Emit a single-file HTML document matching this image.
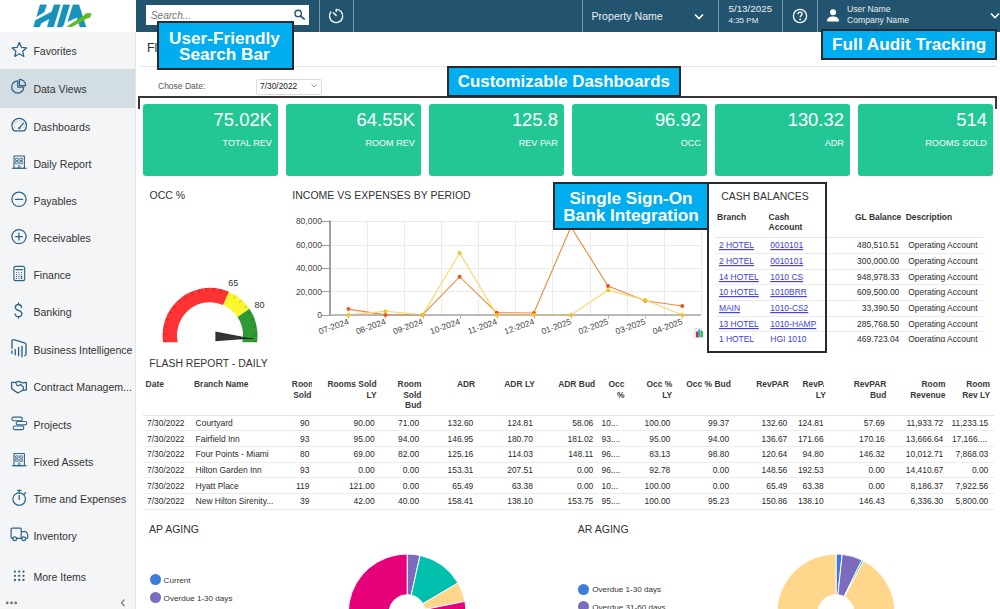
<!DOCTYPE html><html><head><meta charset="utf-8"><style>
html,body{margin:0;padding:0;}
body{width:1000px;height:609px;overflow:hidden;position:relative;background:#fff;font-family:"Liberation Sans",sans-serif;}
.t{position:absolute;white-space:nowrap;}
svg{position:absolute;overflow:visible;}
</style></head><body><div style="position:absolute;left:0px;top:0px;width:135px;height:32px;background:#fff;"></div><div style="position:absolute;left:0px;top:32px;width:135px;height:577px;background:#f4f5f7;"></div><div style="position:absolute;left:135px;top:32px;width:1px;height:577px;background:#e4e6e8;"></div><div style="position:absolute;left:0px;top:69px;width:135px;height:38.5px;background:#d3dde4;"></div><svg style="left:0;top:0" width="136" height="32" viewBox="0 0 136 32">
<g fill="#1793bb" stroke="#1793bb" stroke-width="0.3" stroke-linejoin="round">
<path d="M40.05 4.76 L46.7 4.76 L44.3 11.9 L36.6 16.7 Z"/>
<path d="M33.6 27.06 L39.6 27.06 L41.2 23.15 L49.5 18.8 L47.2 27.06 L53.6 27.06 L60.3 4.76 L54.1 4.76 L51.8 11.66 L35.2 20.4 Z"/>
<path d="M63.36 4.76 L69.8 4.76 L63.8 24.5 Q63 27.06 61.06 27.06 L56.9 27.06 Z"/>
<path d="M73.0 4.76 L79.0 4.76 L86.1 27.06 L79.9 27.06 L76.9 17.4 L67.7 21.8 Z"/>
</g>
<path d="M66.35 26.84 L84.06 15.34 L85.9 13.27 L91.8 13.27 L89.8 18.33 L88.43 17.87 L71.87 27.06 Z" fill="#5fbb24"/>
</svg><div class="t" style="top:46.05px;font-size:10.55px;line-height:11.79px;color:#333;left:33.40px;">Favorites</div><div class="t" style="top:84.05px;font-size:10.55px;line-height:11.79px;color:#333;left:33.40px;">Data Views</div><div class="t" style="top:121.55px;font-size:10.55px;line-height:11.79px;color:#333;left:33.40px;">Dashboards</div><div class="t" style="top:158.65px;font-size:10.55px;line-height:11.79px;color:#333;left:33.40px;">Daily Report</div><div class="t" style="top:195.75px;font-size:10.55px;line-height:11.79px;color:#333;left:33.40px;">Payables</div><div class="t" style="top:232.65px;font-size:10.55px;line-height:11.79px;color:#333;left:33.40px;">Receivables</div><div class="t" style="top:269.75px;font-size:10.55px;line-height:11.79px;color:#333;left:33.40px;">Finance</div><div class="t" style="top:306.75px;font-size:10.55px;line-height:11.79px;color:#333;left:33.40px;">Banking</div><div class="t" style="top:344.65px;font-size:10.55px;line-height:11.79px;color:#333;left:33.40px;">Business Intelligence</div><div class="t" style="top:382.35px;font-size:10.55px;line-height:11.79px;color:#333;left:33.40px;">Contract Managem...</div><div class="t" style="top:419.65px;font-size:10.55px;line-height:11.79px;color:#333;left:33.40px;">Projects</div><div class="t" style="top:456.75px;font-size:10.55px;line-height:11.79px;color:#333;left:33.40px;">Fixed Assets</div><div class="t" style="top:493.95px;font-size:10.55px;line-height:11.79px;color:#333;left:33.40px;">Time and Expenses</div><div class="t" style="top:531.05px;font-size:10.55px;line-height:11.79px;color:#333;left:33.40px;">Inventory</div><div class="t" style="top:571.65px;font-size:10.55px;line-height:11.79px;color:#333;left:33.40px;">More Items</div><svg style="left:0;top:0" width="136" height="609" fill="none" stroke="#2f6385" stroke-width="1.25" stroke-linejoin="round" stroke-linecap="round"><polygon points="19.30,42.50 21.42,47.29 26.62,47.82 22.72,51.31 23.83,56.43 19.30,53.80 14.77,56.43 15.88,51.31 11.98,47.82 17.18,47.29"/><path d="M17.75 80.9 A6.1 6.1 0 1 0 23.85 87 L17.75 87 Z"/><path d="M19.4 79.3 A6.2 6.2 0 0 1 25.6 85.5 L19.4 85.5 Z"/><path d="M13.95 130.77 A7.3 7.3 0 1 1 24.45 130.77 Z"/><circle cx="14.44" cy="127.25" r="0.45" fill="#2f6385" stroke="none"/><circle cx="14.26" cy="124.92" r="0.45" fill="#2f6385" stroke="none"/><circle cx="15.15" cy="122.76" r="0.45" fill="#2f6385" stroke="none"/><circle cx="16.93" cy="121.24" r="0.45" fill="#2f6385" stroke="none"/><circle cx="19.20" cy="120.70" r="0.45" fill="#2f6385" stroke="none"/><circle cx="21.47" cy="121.24" r="0.45" fill="#2f6385" stroke="none"/><circle cx="23.25" cy="122.76" r="0.45" fill="#2f6385" stroke="none"/><circle cx="24.14" cy="124.92" r="0.45" fill="#2f6385" stroke="none"/><circle cx="23.96" cy="127.25" r="0.45" fill="#2f6385" stroke="none"/><path d="M19.3 128.1 L23.2 123.4" stroke-width="1.3"/><circle cx="19.3" cy="128.1" r="1.2" fill="#2f6385" stroke="none"/><rect x="14" y="156" width="10.4" height="12.3" stroke-width="1.1"/><path d="M12.2 168.3 L26.4 168.3" stroke-width="1.1"/><rect x="16.0" y="158.3" width="2.2" height="2.2" stroke-width="0.8"/><rect x="20.2" y="158.3" width="2.2" height="2.2" stroke-width="0.8"/><rect x="16.0" y="161.6" width="2.2" height="2.2" stroke-width="0.8"/><rect x="20.2" y="161.6" width="2.2" height="2.2" stroke-width="0.8"/><path d="M18.4 168.3 L18.4 165.8 Q19.2 164.9 20.0 165.8 L20.0 168.3" stroke-width="0.8"/><rect x="14" y="453.5" width="10.4" height="12.3" stroke-width="1.1"/><path d="M12.2 465.8 L26.4 465.8" stroke-width="1.1"/><rect x="16.0" y="455.8" width="2.2" height="2.2" stroke-width="0.8"/><rect x="20.2" y="455.8" width="2.2" height="2.2" stroke-width="0.8"/><rect x="16.0" y="459.1" width="2.2" height="2.2" stroke-width="0.8"/><rect x="20.2" y="459.1" width="2.2" height="2.2" stroke-width="0.8"/><path d="M18.4 465.8 L18.4 463.3 Q19.2 462.4 20.0 463.3 L20.0 465.8" stroke-width="0.8"/><circle cx="19" cy="199.3" r="7.1"/><path d="M15.3 199.3 L22.7 199.3"/><circle cx="19" cy="236.6" r="7.1"/><path d="M15.6 236.6 L22.4 236.6 M19 233.2 L19 240"/><rect x="13.9" y="266.3" width="10.8" height="14.4" rx="2" stroke-width="1.15"/><path d="M15.9 269.6 L22.7 269.6" stroke-width="1.3"/><circle cx="16.5" cy="272.5" r="0.6" fill="#2f6385" stroke="none"/><circle cx="16.5" cy="274.5" r="0.6" fill="#2f6385" stroke="none"/><circle cx="16.5" cy="276.4" r="0.6" fill="#2f6385" stroke="none"/><circle cx="16.5" cy="278.4" r="0.6" fill="#2f6385" stroke="none"/><circle cx="19.0" cy="272.5" r="0.6" fill="#2f6385" stroke="none"/><circle cx="19.0" cy="274.5" r="0.6" fill="#2f6385" stroke="none"/><circle cx="19.0" cy="276.4" r="0.6" fill="#2f6385" stroke="none"/><circle cx="19.0" cy="278.4" r="0.6" fill="#2f6385" stroke="none"/><circle cx="21.5" cy="272.5" r="0.6" fill="#2f6385" stroke="none"/><circle cx="21.5" cy="274.5" r="0.6" fill="#2f6385" stroke="none"/><path d="M21.5 276.2 L21.5 278.6" stroke-width="1.2"/><path d="M21.6 307.3 C21.2 305.4 20.1 304.5 18.5 304.5 C16.6 304.5 15.3 305.7 15.3 307.4 C15.3 311.2 21.9 309.6 21.9 313.8 C21.9 315.6 20.5 316.7 18.5 316.7 C16.6 316.7 15.4 315.6 15.1 314 M18.5 302.9 L18.5 304.5 M18.5 316.7 L18.5 318.2" stroke-width="1.3"/><path d="M12 348.2 L12 341.2 Q12 339.4 13.6 339.7 L24.6 342.9 Q26 343.4 26 344.8 L26 354.3 Q26 355.4 24.8 355.6" stroke-width="1.35"/><path d="M12 350.8 L12 353.4" stroke-width="1.35"/><path d="M15.3 349.6 L15.3 354.8" stroke-width="1.35"/><path d="M18.6 347.4 L18.6 355.7" stroke-width="1.35"/><path d="M22.0 346.3 L22.0 356.5" stroke-width="1.35"/><path d="M11.6 382.3 L16.2 382.3 M19.2 381.6 L22.8 382.9 L26.4 382.3 L26.4 390.2 L22.9 390.2 L17.8 393 L11.6 388.6 L11.6 382.3" stroke-width="1.3"/><path d="M15.7 382.5 L16.9 385.2 Q19.2 386.5 20.6 384.4 L23.6 387.3 L22.9 390.2 M16.2 382.3 Q18.3 380.8 19.4 381.6" stroke-width="1.2"/><rect x="11.9" y="417.1" width="10.4" height="3.6" rx="1.6" stroke-width="1.1"/><rect x="16.2" y="421.5" width="10.6" height="3.4" rx="1.6" stroke-width="1.1"/><rect x="13.1" y="426" width="10.6" height="3.6" rx="1.6" stroke-width="1.1"/><circle cx="19.2" cy="499.1" r="6.3"/><path d="M17.6 490.4 L20.8 490.4 M19.2 490.4 L19.2 492.8 M23.9 494.3 L25.7 492.7 M19.2 495.5 L19.2 499.4" stroke-width="1.3"/><path d="M12.8 538.4 L11.9 538.4 Q11.1 538.4 11.1 537.6 L11.1 529.3 Q11.1 528.2 12.2 528.2 L20.2 528.2 Q21.2 528.2 21.2 529.3 L21.2 538.4 L21.7 538.4 M21.2 531.7 L25.3 531.7 Q26.2 531.7 26.7 532.5 L27.7 534.6 L27.7 537.6 Q27.7 538.4 26.9 538.4 L25.7 538.4 M16.7 538.4 L21.7 538.4" stroke-width="1.2"/><circle cx="14.7" cy="538.8" r="1.9" stroke-width="1.2"/><circle cx="23.7" cy="538.8" r="1.9" stroke-width="1.2"/><circle cx="14.9" cy="571.6" r="1.15" fill="#2f6385" stroke="none"/><circle cx="14.9" cy="575.8" r="1.15" fill="#2f6385" stroke="none"/><circle cx="14.9" cy="580.0" r="1.15" fill="#2f6385" stroke="none"/><circle cx="19.2" cy="571.6" r="1.15" fill="#2f6385" stroke="none"/><circle cx="19.2" cy="575.8" r="1.15" fill="#2f6385" stroke="none"/><circle cx="19.2" cy="580.0" r="1.15" fill="#2f6385" stroke="none"/><circle cx="23.5" cy="571.6" r="1.15" fill="#2f6385" stroke="none"/><circle cx="23.5" cy="575.8" r="1.15" fill="#2f6385" stroke="none"/><circle cx="23.5" cy="580.0" r="1.15" fill="#2f6385" stroke="none"/></svg><svg style="left:0;top:595px" width="136" height="14"><g fill="#6e6e6e"><circle cx="7.3" cy="7.9" r="1.3"/><circle cx="11.5" cy="7.9" r="1.3"/><circle cx="15.7" cy="7.9" r="1.3"/></g><path d="M124.5 4.5 L121.5 7.8 L124.5 11" stroke="#666" stroke-width="1.1" fill="none"/></svg><div style="position:absolute;left:136px;top:0px;width:864px;height:32px;background:#23546f;"></div><div style="position:absolute;left:318.5px;top:0px;width:1px;height:32px;background:#7b98a9;"></div><div style="position:absolute;left:353px;top:0px;width:1px;height:32px;background:#7b98a9;"></div><div style="position:absolute;left:582px;top:0px;width:1px;height:32px;background:#7b98a9;"></div><div style="position:absolute;left:718px;top:0px;width:1px;height:32px;background:#7b98a9;"></div><div style="position:absolute;left:782px;top:0px;width:1px;height:32px;background:#7b98a9;"></div><div style="position:absolute;left:817px;top:0px;width:1px;height:32px;background:#7b98a9;"></div><div style="position:absolute;left:146px;top:5px;width:163px;height:19.5px;background:#fff;"></div><div class="t" style="top:9.56px;font-size:10.1px;line-height:11.28px;color:#727272;left:150.80px;font-style:italic;">Search...</div><svg style="left:290px;top:8px" width="18" height="15"><circle cx="8.2" cy="5.4" r="3.2" fill="none" stroke="#23546f" stroke-width="1.4"/><path d="M10.6 7.8 L14.2 11.2" stroke="#23546f" stroke-width="1.6" stroke-linecap="round"/></svg><svg style="left:0;top:0" width="1000" height="32"><path d="M336.2 11.4 L336.2 9.4 A6.6 6.6 0 1 1 330.83 12.03" fill="none" stroke="#fff" stroke-width="1.4" stroke-linecap="round" stroke-linejoin="round"/><path d="M333.4 12.7 L336.2 15.5" stroke="#fff" stroke-width="1.4" stroke-linecap="round"/></svg><div class="t" style="top:10.60px;font-size:10.6px;line-height:11.84px;color:#e9eef1;left:591.50px;">Property Name</div><svg style="left:692px;top:10px" width="14" height="12"><path d="M3 4.5 L7 8.5 L11 4.5" fill="none" stroke="#fff" stroke-width="1.6"/></svg><div class="t" style="top:3.83px;font-size:9.8px;line-height:10.95px;color:#e9eef1;left:728.50px;">5/13/2025</div><div class="t" style="top:16.76px;font-size:8px;line-height:8.94px;color:#e9eef1;left:728.50px;">4:35 PM</div><svg style="left:791px;top:7px" width="18" height="18"><circle cx="9" cy="9" r="6.6" fill="none" stroke="#fff" stroke-width="1.3"/><path d="M7 7.3 C7 5.9 8 5.2 9.1 5.2 C10.3 5.2 11.1 6 11.1 7.1 C11.1 8.4 9.2 8.7 9.2 10.2" fill="none" stroke="#fff" stroke-width="1.3"/><circle cx="9.2" cy="12.4" r="0.9" fill="#fff"/></svg><svg style="left:824px;top:7px" width="18" height="18"><circle cx="9" cy="5.3" r="3" fill="#fff"/><path d="M3 14.5 C3 10.8 6 9.6 9 9.6 C12 9.6 15 10.8 15 14.5 Z" fill="#fff"/></svg><div class="t" style="top:5.01px;font-size:8.6px;line-height:9.61px;color:#e9eef1;left:847.00px;">User Name</div><div class="t" style="top:15.61px;font-size:8.6px;line-height:9.61px;color:#e9eef1;left:847.00px;">Company Name</div><svg style="left:988px;top:10px" width="12" height="12"><path d="M3 3.5 L7 7.5 L11 3.5" fill="none" stroke="#fff" stroke-width="1.6"/></svg><div class="t" style="top:42.27px;font-size:12.4px;line-height:13.85px;color:#2a2a2a;left:147.00px;">Flash Dashboard</div><div style="position:absolute;left:140px;top:66px;width:857px;height:1px;background:#e6e6e6;"></div><div class="t" style="top:81.70px;font-size:8.5px;line-height:9.50px;color:#555;left:158.00px;">Chose Date:</div><div style="position:absolute;left:255.5px;top:78.5px;width:64px;height:14.5px;border:1px solid #dcdcdc;border-radius:2px;background:#fff;"></div><div class="t" style="top:81.80px;font-size:8.4px;line-height:9.38px;color:#222;left:260.00px;">7/30/2022</div><svg style="left:310px;top:82px" width="8" height="8"><path d="M1.5 2.5 L4 5 L6.5 2.5" fill="none" stroke="#888" stroke-width="0.9"/></svg><div style="position:absolute;left:143.2px;top:103.5px;width:134.7px;height:72.5px;background:#22c795;border-radius:3px;"></div><div class="t" style="top:109.64px;font-size:18.4px;line-height:20.56px;color:#fff;right:728.10px;text-align:right;">75.02K</div><div class="t" style="top:138.16px;font-size:9.1px;line-height:10.17px;color:#fff;transform:scaleY(1.04);transform-origin:0 8.24px;right:728.10px;text-align:right;">TOTAL REV</div><div style="position:absolute;left:286.2px;top:103.5px;width:134.7px;height:72.5px;background:#22c795;border-radius:3px;"></div><div class="t" style="top:109.64px;font-size:18.4px;line-height:20.56px;color:#fff;right:585.10px;text-align:right;">64.55K</div><div class="t" style="top:138.16px;font-size:9.1px;line-height:10.17px;color:#fff;transform:scaleY(1.04);transform-origin:0 8.24px;right:585.10px;text-align:right;">ROOM REV</div><div style="position:absolute;left:429.2px;top:103.5px;width:134.7px;height:72.5px;background:#22c795;border-radius:3px;"></div><div class="t" style="top:109.64px;font-size:18.4px;line-height:20.56px;color:#fff;right:442.10px;text-align:right;">125.8</div><div class="t" style="top:138.16px;font-size:9.1px;line-height:10.17px;color:#fff;transform:scaleY(1.04);transform-origin:0 8.24px;right:442.10px;text-align:right;">REV PAR</div><div style="position:absolute;left:572.2px;top:103.5px;width:134.7px;height:72.5px;background:#22c795;border-radius:3px;"></div><div class="t" style="top:109.64px;font-size:18.4px;line-height:20.56px;color:#fff;right:299.10px;text-align:right;">96.92</div><div class="t" style="top:138.16px;font-size:9.1px;line-height:10.17px;color:#fff;transform:scaleY(1.04);transform-origin:0 8.24px;right:299.10px;text-align:right;">OCC</div><div style="position:absolute;left:715.2px;top:103.5px;width:134.7px;height:72.5px;background:#22c795;border-radius:3px;"></div><div class="t" style="top:109.64px;font-size:18.4px;line-height:20.56px;color:#fff;right:156.10px;text-align:right;">130.32</div><div class="t" style="top:138.16px;font-size:9.1px;line-height:10.17px;color:#fff;transform:scaleY(1.04);transform-origin:0 8.24px;right:156.10px;text-align:right;">ADR</div><div style="position:absolute;left:858.2px;top:103.5px;width:134.7px;height:72.5px;background:#22c795;border-radius:3px;"></div><div class="t" style="top:109.64px;font-size:18.4px;line-height:20.56px;color:#fff;right:13.10px;text-align:right;">514</div><div class="t" style="top:138.16px;font-size:9.1px;line-height:10.17px;color:#fff;transform:scaleY(1.04);transform-origin:0 8.24px;right:13.10px;text-align:right;">ROOMS SOLD</div><div style="position:absolute;left:138px;top:96px;width:859px;height:2px;background:#38363c;"></div><div style="position:absolute;left:138px;top:96px;width:2px;height:12.5px;background:#38363c;"></div><div style="position:absolute;left:995px;top:96px;width:2px;height:12.5px;background:#38363c;"></div><div class="t" style="top:190.49px;font-size:10.5px;line-height:11.73px;color:#333;left:149.50px;">OCC %</div><div class="t" style="top:190.49px;font-size:10.5px;line-height:11.73px;color:#333;left:292.30px;">INCOME VS EXPENSES BY PERIOD</div><div class="t" style="top:190.54px;font-size:10.45px;line-height:11.67px;color:#333;left:721.20px;">CASH BALANCES</div><svg style="left:0;top:0" width="1000" height="609"><defs><clipPath id="gc"><rect x="150" y="270" width="120" height="72.3"/></clipPath></defs><g clip-path="url(#gc)"><path d="M167.05 355.30 A47.45 47.45 0 0 1 228.89 291.70 L223.16 304.96 A33.0 33.0 0 0 0 180.14 349.20 Z" fill="#fe3333"/><path d="M228.89 291.70 A47.45 47.45 0 0 1 249.48 308.85 L237.47 316.89 A33.0 33.0 0 0 0 223.16 304.96 Z" fill="#fbf72f"/><path d="M249.48 308.85 A47.45 47.45 0 0 1 253.05 355.30 L239.96 349.20 A33.0 33.0 0 0 0 237.47 316.89 Z" fill="#2f9a33"/><line x1="163.32" y1="341.53" x2="166.99" y2="341.03" stroke="rgba(0,0,0,0.28)" stroke-width="0.8"/><line x1="162.92" y1="333.89" x2="166.62" y2="334.00" stroke="rgba(0,0,0,0.28)" stroke-width="0.8"/><line x1="163.76" y1="326.29" x2="167.39" y2="327.00" stroke="rgba(0,0,0,0.28)" stroke-width="0.8"/><line x1="165.81" y1="318.93" x2="169.29" y2="320.21" stroke="rgba(0,0,0,0.28)" stroke-width="0.8"/><line x1="169.03" y1="312.00" x2="172.25" y2="313.82" stroke="rgba(0,0,0,0.28)" stroke-width="0.8"/><line x1="173.33" y1="305.67" x2="176.21" y2="307.99" stroke="rgba(0,0,0,0.28)" stroke-width="0.8"/><line x1="178.59" y1="300.13" x2="181.06" y2="302.88" stroke="rgba(0,0,0,0.28)" stroke-width="0.8"/><line x1="184.68" y1="295.51" x2="186.67" y2="298.63" stroke="rgba(0,0,0,0.28)" stroke-width="0.8"/><line x1="191.44" y1="291.93" x2="192.90" y2="295.33" stroke="rgba(0,0,0,0.28)" stroke-width="0.8"/><line x1="198.68" y1="289.49" x2="199.58" y2="293.08" stroke="rgba(0,0,0,0.28)" stroke-width="0.8"/><line x1="206.23" y1="288.26" x2="206.53" y2="291.94" stroke="rgba(0,0,0,0.28)" stroke-width="0.8"/><line x1="213.87" y1="288.26" x2="213.57" y2="291.94" stroke="rgba(0,0,0,0.28)" stroke-width="0.8"/><line x1="221.42" y1="289.49" x2="220.52" y2="293.08" stroke="rgba(0,0,0,0.28)" stroke-width="0.8"/><line x1="228.66" y1="291.93" x2="227.20" y2="295.33" stroke="rgba(0,0,0,0.28)" stroke-width="0.8"/><line x1="235.42" y1="295.51" x2="233.43" y2="298.63" stroke="rgba(0,0,0,0.28)" stroke-width="0.8"/><line x1="241.51" y1="300.13" x2="239.04" y2="302.88" stroke="rgba(0,0,0,0.28)" stroke-width="0.8"/><line x1="246.77" y1="305.67" x2="243.89" y2="307.99" stroke="rgba(0,0,0,0.28)" stroke-width="0.8"/><line x1="251.07" y1="312.00" x2="247.85" y2="313.82" stroke="rgba(0,0,0,0.28)" stroke-width="0.8"/><line x1="254.29" y1="318.93" x2="250.81" y2="320.21" stroke="rgba(0,0,0,0.28)" stroke-width="0.8"/><line x1="256.34" y1="326.29" x2="252.71" y2="327.00" stroke="rgba(0,0,0,0.28)" stroke-width="0.8"/><line x1="257.18" y1="333.89" x2="253.48" y2="334.00" stroke="rgba(0,0,0,0.28)" stroke-width="0.8"/><line x1="256.78" y1="341.53" x2="253.11" y2="341.03" stroke="rgba(0,0,0,0.28)" stroke-width="0.8"/></g><polygon points="215.4,331.4 215.4,341.3 251.8,338.4" fill="#333"/><line x1="240" y1="338.6" x2="253.5" y2="338.5" stroke="#222" stroke-width="1"/><text x="233.3" y="286.3" font-size="9" fill="#333" text-anchor="middle">65</text><text x="254.4" y="308.2" font-size="9" fill="#333">80</text><line x1="329.8" y1="221.5" x2="700.8" y2="221.5" stroke="#ebebeb" stroke-width="1"/><line x1="321.3" y1="221.5" x2="329.8" y2="221.5" stroke="#999" stroke-width="1"/><text x="321.90000000000003" y="224.30" font-size="8.5" fill="#444" text-anchor="end">80,000</text><line x1="329.8" y1="245.5" x2="700.8" y2="245.5" stroke="#ebebeb" stroke-width="1"/><line x1="321.3" y1="245.5" x2="329.8" y2="245.5" stroke="#999" stroke-width="1"/><text x="321.90000000000003" y="247.75" font-size="8.5" fill="#444" text-anchor="end">60,000</text><line x1="329.8" y1="268.5" x2="700.8" y2="268.5" stroke="#ebebeb" stroke-width="1"/><line x1="321.3" y1="268.5" x2="329.8" y2="268.5" stroke="#999" stroke-width="1"/><text x="321.90000000000003" y="271.20" font-size="8.5" fill="#444" text-anchor="end">40,000</text><line x1="329.8" y1="291.5" x2="700.8" y2="291.5" stroke="#ebebeb" stroke-width="1"/><line x1="321.3" y1="291.5" x2="329.8" y2="291.5" stroke="#999" stroke-width="1"/><text x="321.90000000000003" y="294.65" font-size="8.5" fill="#444" text-anchor="end">20,000</text><line x1="329.8" y1="315.5" x2="700.8" y2="315.5" stroke="#ebebeb" stroke-width="1"/><line x1="321.3" y1="315.5" x2="329.8" y2="315.5" stroke="#999" stroke-width="1"/><text x="321.90000000000003" y="318.10" font-size="8.5" fill="#444" text-anchor="end">0</text><line x1="367.5" y1="221.1" x2="367.5" y2="314.9" stroke="#ebebeb" stroke-width="1"/><line x1="404.5" y1="221.1" x2="404.5" y2="314.9" stroke="#ebebeb" stroke-width="1"/><line x1="441.5" y1="221.1" x2="441.5" y2="314.9" stroke="#ebebeb" stroke-width="1"/><line x1="478.5" y1="221.1" x2="478.5" y2="314.9" stroke="#ebebeb" stroke-width="1"/><line x1="515.5" y1="221.1" x2="515.5" y2="314.9" stroke="#ebebeb" stroke-width="1"/><line x1="552.5" y1="221.1" x2="552.5" y2="314.9" stroke="#ebebeb" stroke-width="1"/><line x1="590.5" y1="221.1" x2="590.5" y2="314.9" stroke="#ebebeb" stroke-width="1"/><line x1="627.5" y1="221.1" x2="627.5" y2="314.9" stroke="#ebebeb" stroke-width="1"/><line x1="664.5" y1="221.1" x2="664.5" y2="314.9" stroke="#ebebeb" stroke-width="1"/><line x1="701.5" y1="221.1" x2="701.5" y2="314.9" stroke="#ebebeb" stroke-width="1"/><line x1="330" y1="220.6" x2="330" y2="315.4" stroke="#8a8a8a" stroke-width="1.6"/><line x1="329.8" y1="315" x2="700.8" y2="315" stroke="#a8a8a8" stroke-width="1.1"/><line x1="348.5" y1="314.9" x2="348.5" y2="318.9" stroke="#aaa" stroke-width="0.8"/><line x1="385.5" y1="314.9" x2="385.5" y2="318.9" stroke="#aaa" stroke-width="0.8"/><line x1="423.5" y1="314.9" x2="423.5" y2="318.9" stroke="#aaa" stroke-width="0.8"/><line x1="460.5" y1="314.9" x2="460.5" y2="318.9" stroke="#aaa" stroke-width="0.8"/><line x1="497.5" y1="314.9" x2="497.5" y2="318.9" stroke="#aaa" stroke-width="0.8"/><line x1="534.5" y1="314.9" x2="534.5" y2="318.9" stroke="#aaa" stroke-width="0.8"/><line x1="571.5" y1="314.9" x2="571.5" y2="318.9" stroke="#aaa" stroke-width="0.8"/><line x1="608.5" y1="314.9" x2="608.5" y2="318.9" stroke="#aaa" stroke-width="0.8"/><line x1="645.5" y1="314.9" x2="645.5" y2="318.9" stroke="#aaa" stroke-width="0.8"/><line x1="682.5" y1="314.9" x2="682.5" y2="318.9" stroke="#aaa" stroke-width="0.8"/><text transform="translate(349.35,323.9) rotate(-20)" font-size="8.5" fill="#444" text-anchor="end">07-2024</text><text transform="translate(386.45,323.9) rotate(-20)" font-size="8.5" fill="#444" text-anchor="end">08-2024</text><text transform="translate(423.55,323.9) rotate(-20)" font-size="8.5" fill="#444" text-anchor="end">09-2024</text><text transform="translate(460.65,323.9) rotate(-20)" font-size="8.5" fill="#444" text-anchor="end">10-2024</text><text transform="translate(497.75,323.9) rotate(-20)" font-size="8.5" fill="#444" text-anchor="end">11-2024</text><text transform="translate(534.85,323.9) rotate(-20)" font-size="8.5" fill="#444" text-anchor="end">12-2024</text><text transform="translate(571.95,323.9) rotate(-20)" font-size="8.5" fill="#444" text-anchor="end">01-2025</text><text transform="translate(609.05,323.9) rotate(-20)" font-size="8.5" fill="#444" text-anchor="end">02-2025</text><text transform="translate(646.15,323.9) rotate(-20)" font-size="8.5" fill="#444" text-anchor="end">03-2025</text><text transform="translate(683.25,323.9) rotate(-20)" font-size="8.5" fill="#444" text-anchor="end">04-2025</text><polyline points="348.35,309.10 385.45,314.90 422.55,314.90 459.65,276.70 496.75,312.70 533.85,313.00 570.95,226.96 608.05,286.00 645.15,300.70 682.25,306.00" fill="none" stroke="#f0883a" stroke-width="1.1"/><polyline points="348.35,314.90 385.45,311.20 422.55,314.90 459.65,252.99 496.75,314.90 533.85,314.90 570.95,314.90 608.05,290.20 645.15,300.01 682.25,314.90" fill="none" stroke="#fdd668" stroke-width="1.1"/><line x1="329.8" y1="315" x2="700.8" y2="315" stroke="#a8a8a8" stroke-width="1.1"/><circle cx="348.35" cy="309.10" r="2" fill="#e8561b"/><circle cx="385.45" cy="314.90" r="2" fill="#e8561b"/><circle cx="422.55" cy="314.90" r="2" fill="#e8561b"/><circle cx="459.65" cy="276.70" r="2" fill="#e8561b"/><circle cx="496.75" cy="312.70" r="2" fill="#e8561b"/><circle cx="533.85" cy="313.00" r="2" fill="#e8561b"/><circle cx="570.95" cy="226.96" r="2" fill="#e8561b"/><circle cx="608.05" cy="286.00" r="2" fill="#e8561b"/><circle cx="645.15" cy="300.70" r="2" fill="#e8561b"/><circle cx="682.25" cy="306.00" r="2" fill="#e8561b"/><circle cx="348.35" cy="314.90" r="2" fill="#f9c31f"/><circle cx="385.45" cy="311.20" r="2" fill="#f9c31f"/><circle cx="422.55" cy="314.90" r="2" fill="#f9c31f"/><circle cx="459.65" cy="252.99" r="2" fill="#f9c31f"/><circle cx="496.75" cy="314.90" r="2" fill="#f9c31f"/><circle cx="533.85" cy="314.90" r="2" fill="#f9c31f"/><circle cx="570.95" cy="314.90" r="2" fill="#f9c31f"/><circle cx="608.05" cy="290.20" r="2" fill="#f9c31f"/><circle cx="645.15" cy="300.01" r="2" fill="#f9c31f"/><circle cx="682.25" cy="314.90" r="2" fill="#f9c31f"/><rect x="694.2" y="328.4" width="7.4" height="9" fill="#f4f8fb" stroke="#c9d6e0" stroke-width="0.6"/><rect x="695.9" y="331.6" width="2.4" height="5.8" rx="0.8" fill="#e8262a"/><rect x="698.1" y="329.5" width="2.4" height="7.9" rx="0.8" fill="#2ba4e6"/><rect x="700.7" y="330.8" width="2.3" height="6.6" rx="0.8" fill="#4cb830"/></svg><div class="t" style="top:212.85px;font-size:8.45px;line-height:9.44px;color:#333;font-weight:bold;left:717.10px;">Branch</div><div class="t" style="top:212.85px;font-size:8.45px;line-height:9.44px;color:#333;font-weight:bold;left:768.60px;">Cash</div><div class="t" style="top:223.45px;font-size:8.45px;line-height:9.44px;color:#333;font-weight:bold;left:768.60px;">Account</div><div class="t" style="top:212.85px;font-size:8.45px;line-height:9.44px;color:#333;font-weight:bold;right:98.70px;text-align:right;">GL Balance</div><div class="t" style="top:212.85px;font-size:8.45px;line-height:9.44px;color:#333;font-weight:bold;left:905.70px;">Description</div><div style="position:absolute;left:714.7px;top:237px;width:268px;height:1px;background:#e4e4e4;"></div><div style="position:absolute;left:700px;top:238px;width:300px;height:104.3px;overflow:hidden;"><div class="t" style="top:3.35px;font-size:8.45px;line-height:9.44px;color:#3c3cd8;transform:scaleY(1.13);transform-origin:0 7.65px;left:18.90px;text-decoration:underline;">2 HOTEL</div><div class="t" style="top:3.35px;font-size:8.45px;line-height:9.44px;color:#3c3cd8;transform:scaleY(1.13);transform-origin:0 7.65px;left:70.30px;text-decoration:underline;">0010101</div><div class="t" style="top:3.35px;font-size:8.45px;line-height:9.44px;color:#2a2a2a;transform:scaleY(1.13);transform-origin:0 7.65px;right:100.70px;text-align:right;">480,510.51</div><div class="t" style="top:3.35px;font-size:8.45px;line-height:9.44px;color:#2a2a2a;transform:scaleY(1.13);transform-origin:0 7.65px;left:208.20px;">Operating Account</div><div style="position:absolute;left:14.7px;top:15.00px;width:268px;height:0;border-top:1px solid #ececec;"></div><div class="t" style="top:19.01px;font-size:8.45px;line-height:9.44px;color:#3c3cd8;transform:scaleY(1.13);transform-origin:0 7.65px;left:18.90px;text-decoration:underline;">2 HOTEL</div><div class="t" style="top:19.01px;font-size:8.45px;line-height:9.44px;color:#3c3cd8;transform:scaleY(1.13);transform-origin:0 7.65px;left:70.30px;text-decoration:underline;">0010101</div><div class="t" style="top:19.01px;font-size:8.45px;line-height:9.44px;color:#2a2a2a;transform:scaleY(1.13);transform-origin:0 7.65px;right:100.70px;text-align:right;">300,000.00</div><div class="t" style="top:19.01px;font-size:8.45px;line-height:9.44px;color:#2a2a2a;transform:scaleY(1.13);transform-origin:0 7.65px;left:208.20px;">Operating Account</div><div style="position:absolute;left:14.7px;top:30.66px;width:268px;height:0;border-top:1px solid #ececec;"></div><div class="t" style="top:34.67px;font-size:8.45px;line-height:9.44px;color:#3c3cd8;transform:scaleY(1.13);transform-origin:0 7.65px;left:18.90px;text-decoration:underline;">14 HOTEL</div><div class="t" style="top:34.67px;font-size:8.45px;line-height:9.44px;color:#3c3cd8;transform:scaleY(1.13);transform-origin:0 7.65px;left:70.30px;text-decoration:underline;">1010 CS</div><div class="t" style="top:34.67px;font-size:8.45px;line-height:9.44px;color:#2a2a2a;transform:scaleY(1.13);transform-origin:0 7.65px;right:100.70px;text-align:right;">948,978.33</div><div class="t" style="top:34.67px;font-size:8.45px;line-height:9.44px;color:#2a2a2a;transform:scaleY(1.13);transform-origin:0 7.65px;left:208.20px;">Operating Account</div><div style="position:absolute;left:14.7px;top:46.32px;width:268px;height:0;border-top:1px solid #ececec;"></div><div class="t" style="top:50.33px;font-size:8.45px;line-height:9.44px;color:#3c3cd8;transform:scaleY(1.13);transform-origin:0 7.65px;left:18.90px;text-decoration:underline;">10 HOTEL</div><div class="t" style="top:50.33px;font-size:8.45px;line-height:9.44px;color:#3c3cd8;transform:scaleY(1.13);transform-origin:0 7.65px;left:70.30px;text-decoration:underline;">1010BRR</div><div class="t" style="top:50.33px;font-size:8.45px;line-height:9.44px;color:#2a2a2a;transform:scaleY(1.13);transform-origin:0 7.65px;right:100.70px;text-align:right;">609,500.00</div><div class="t" style="top:50.33px;font-size:8.45px;line-height:9.44px;color:#2a2a2a;transform:scaleY(1.13);transform-origin:0 7.65px;left:208.20px;">Operating Account</div><div style="position:absolute;left:14.7px;top:61.98px;width:268px;height:0;border-top:1px solid #ececec;"></div><div class="t" style="top:65.99px;font-size:8.45px;line-height:9.44px;color:#3c3cd8;transform:scaleY(1.13);transform-origin:0 7.65px;left:18.90px;text-decoration:underline;">MAIN</div><div class="t" style="top:65.99px;font-size:8.45px;line-height:9.44px;color:#3c3cd8;transform:scaleY(1.13);transform-origin:0 7.65px;left:70.30px;text-decoration:underline;">1010-CS2</div><div class="t" style="top:65.99px;font-size:8.45px;line-height:9.44px;color:#2a2a2a;transform:scaleY(1.13);transform-origin:0 7.65px;right:100.70px;text-align:right;">33,390.50</div><div class="t" style="top:65.99px;font-size:8.45px;line-height:9.44px;color:#2a2a2a;transform:scaleY(1.13);transform-origin:0 7.65px;left:208.20px;">Operating Account</div><div style="position:absolute;left:14.7px;top:77.64px;width:268px;height:0;border-top:1px solid #ececec;"></div><div class="t" style="top:81.65px;font-size:8.45px;line-height:9.44px;color:#3c3cd8;transform:scaleY(1.13);transform-origin:0 7.65px;left:18.90px;text-decoration:underline;">13 HOTEL</div><div class="t" style="top:81.65px;font-size:8.45px;line-height:9.44px;color:#3c3cd8;transform:scaleY(1.13);transform-origin:0 7.65px;left:70.30px;text-decoration:underline;">1010-HAMP</div><div class="t" style="top:81.65px;font-size:8.45px;line-height:9.44px;color:#2a2a2a;transform:scaleY(1.13);transform-origin:0 7.65px;right:100.70px;text-align:right;">285,768.50</div><div class="t" style="top:81.65px;font-size:8.45px;line-height:9.44px;color:#2a2a2a;transform:scaleY(1.13);transform-origin:0 7.65px;left:208.20px;">Operating Account</div><div style="position:absolute;left:14.7px;top:93.30px;width:268px;height:0;border-top:1px solid #ececec;"></div><div class="t" style="top:97.31px;font-size:8.45px;line-height:9.44px;color:#3c3cd8;transform:scaleY(1.13);transform-origin:0 7.65px;left:18.90px;">1 HOTEL</div><div class="t" style="top:97.31px;font-size:8.45px;line-height:9.44px;color:#3c3cd8;transform:scaleY(1.13);transform-origin:0 7.65px;left:70.30px;">HGI 1010</div><div class="t" style="top:97.31px;font-size:8.45px;line-height:9.44px;color:#2a2a2a;transform:scaleY(1.13);transform-origin:0 7.65px;right:100.70px;text-align:right;">469,723.04</div><div class="t" style="top:97.31px;font-size:8.45px;line-height:9.44px;color:#2a2a2a;transform:scaleY(1.13);transform-origin:0 7.65px;left:208.20px;">Operating Account</div></div><div class="t" style="top:358.34px;font-size:10.45px;line-height:11.67px;color:#333;left:149.30px;">FLASH REPORT - DAILY</div><div class="t" style="top:380.05px;font-size:8.45px;line-height:9.44px;color:#3a3a3a;font-weight:bold;left:145.60px;">Date</div><div class="t" style="top:380.05px;font-size:8.45px;line-height:9.44px;color:#3a3a3a;font-weight:bold;left:194.00px;">Branch Name</div><div style="position:absolute;left:291.8px;top:380.05px;width:20.19999999999999px;height:12px;overflow:hidden;"><div class="t" style="left:0;top:0;font-size:8.45px;line-height:9.44px;font-weight:bold;color:#3a3a3a;">Room</div></div><div class="t" style="top:390.55px;font-size:8.45px;line-height:9.44px;color:#3a3a3a;font-weight:bold;right:688.60px;text-align:right;">Sold</div><div class="t" style="top:380.05px;font-size:8.45px;line-height:9.44px;color:#3a3a3a;font-weight:bold;right:623.40px;text-align:right;">Rooms Sold</div><div class="t" style="top:390.55px;font-size:8.45px;line-height:9.44px;color:#3a3a3a;font-weight:bold;right:623.40px;text-align:right;">LY</div><div class="t" style="top:380.05px;font-size:8.45px;line-height:9.44px;color:#3a3a3a;font-weight:bold;right:578.50px;text-align:right;">Room</div><div class="t" style="top:390.55px;font-size:8.45px;line-height:9.44px;color:#3a3a3a;font-weight:bold;right:578.50px;text-align:right;">Sold</div><div class="t" style="top:400.95px;font-size:8.45px;line-height:9.44px;color:#3a3a3a;font-weight:bold;right:578.50px;text-align:right;">Bud</div><div class="t" style="top:380.05px;font-size:8.45px;line-height:9.44px;color:#3a3a3a;font-weight:bold;right:524.80px;text-align:right;">ADR</div><div class="t" style="top:380.05px;font-size:8.45px;line-height:9.44px;color:#3a3a3a;font-weight:bold;right:465.10px;text-align:right;">ADR LY</div><div class="t" style="top:380.05px;font-size:8.45px;line-height:9.44px;color:#3a3a3a;font-weight:bold;right:404.80px;text-align:right;">ADR Bud</div><div class="t" style="top:380.05px;font-size:8.45px;line-height:9.44px;color:#3a3a3a;font-weight:bold;right:375.50px;text-align:right;">Occ</div><div class="t" style="top:390.55px;font-size:8.45px;line-height:9.44px;color:#3a3a3a;font-weight:bold;right:375.50px;text-align:right;">%</div><div class="t" style="top:380.05px;font-size:8.45px;line-height:9.44px;color:#3a3a3a;font-weight:bold;right:327.80px;text-align:right;">Occ %</div><div class="t" style="top:390.55px;font-size:8.45px;line-height:9.44px;color:#3a3a3a;font-weight:bold;right:327.80px;text-align:right;">LY</div><div class="t" style="top:380.05px;font-size:8.45px;line-height:9.44px;color:#3a3a3a;font-weight:bold;right:269.20px;text-align:right;">Occ % Bud</div><div class="t" style="top:380.05px;font-size:8.45px;line-height:9.44px;color:#3a3a3a;font-weight:bold;right:211.10px;text-align:right;">RevPAR</div><div style="position:absolute;left:802.4px;top:380.05px;width:21.399999999999977px;height:12px;overflow:hidden;"><div class="t" style="left:0;top:0;font-size:8.45px;line-height:9.44px;font-weight:bold;color:#3a3a3a;">RevPAR</div></div><div class="t" style="top:390.55px;font-size:8.45px;line-height:9.44px;color:#3a3a3a;font-weight:bold;right:174.20px;text-align:right;">LY</div><div class="t" style="top:380.05px;font-size:8.45px;line-height:9.44px;color:#3a3a3a;font-weight:bold;right:113.60px;text-align:right;">RevPAR</div><div class="t" style="top:390.55px;font-size:8.45px;line-height:9.44px;color:#3a3a3a;font-weight:bold;right:113.60px;text-align:right;">Bud</div><div class="t" style="top:380.05px;font-size:8.45px;line-height:9.44px;color:#3a3a3a;font-weight:bold;right:54.60px;text-align:right;">Room</div><div class="t" style="top:390.55px;font-size:8.45px;line-height:9.44px;color:#3a3a3a;font-weight:bold;right:54.60px;text-align:right;">Revenue</div><div class="t" style="top:380.05px;font-size:8.45px;line-height:9.44px;color:#3a3a3a;font-weight:bold;right:9.90px;text-align:right;">Room</div><div class="t" style="top:390.55px;font-size:8.45px;line-height:9.44px;color:#3a3a3a;font-weight:bold;right:9.90px;text-align:right;">Rev LY</div><div style="position:absolute;left:143px;top:414.6px;width:850.5px;height:1px;background:#e2e2e2;"></div><div class="t" style="top:418.95px;font-size:8.45px;line-height:9.44px;color:#2a2a2a;transform:scaleY(1.14);transform-origin:0 7.65px;left:147.00px;">7/30/2022</div><div class="t" style="top:418.95px;font-size:8.45px;line-height:9.44px;color:#2a2a2a;transform:scaleY(1.14);transform-origin:0 7.65px;left:195.60px;">Courtyard</div><div class="t" style="top:418.95px;font-size:8.45px;line-height:9.44px;color:#2a2a2a;transform:scaleY(1.14);transform-origin:0 7.65px;right:690.60px;text-align:right;">90</div><div class="t" style="top:418.95px;font-size:8.45px;line-height:9.44px;color:#2a2a2a;transform:scaleY(1.14);transform-origin:0 7.65px;right:625.30px;text-align:right;">90.00</div><div class="t" style="top:418.95px;font-size:8.45px;line-height:9.44px;color:#2a2a2a;transform:scaleY(1.14);transform-origin:0 7.65px;right:580.80px;text-align:right;">71.00</div><div class="t" style="top:418.95px;font-size:8.45px;line-height:9.44px;color:#2a2a2a;transform:scaleY(1.14);transform-origin:0 7.65px;right:526.70px;text-align:right;">132.60</div><div class="t" style="top:418.95px;font-size:8.45px;line-height:9.44px;color:#2a2a2a;transform:scaleY(1.14);transform-origin:0 7.65px;right:467.00px;text-align:right;">124.81</div><div class="t" style="top:418.95px;font-size:8.45px;line-height:9.44px;color:#2a2a2a;transform:scaleY(1.14);transform-origin:0 7.65px;right:406.70px;text-align:right;">58.06</div><div class="t" style="top:418.95px;font-size:8.45px;line-height:9.44px;color:#2a2a2a;transform:scaleY(1.14);transform-origin:0 7.65px;left:601.60px;">10...</div><div class="t" style="top:418.95px;font-size:8.45px;line-height:9.44px;color:#2a2a2a;transform:scaleY(1.14);transform-origin:0 7.65px;right:329.70px;text-align:right;">100.00</div><div class="t" style="top:418.95px;font-size:8.45px;line-height:9.44px;color:#2a2a2a;transform:scaleY(1.14);transform-origin:0 7.65px;right:270.80px;text-align:right;">99.37</div><div class="t" style="top:418.95px;font-size:8.45px;line-height:9.44px;color:#2a2a2a;transform:scaleY(1.14);transform-origin:0 7.65px;right:212.70px;text-align:right;">132.60</div><div class="t" style="top:418.95px;font-size:8.45px;line-height:9.44px;color:#2a2a2a;transform:scaleY(1.14);transform-origin:0 7.65px;right:176.30px;text-align:right;">124.81</div><div class="t" style="top:418.95px;font-size:8.45px;line-height:9.44px;color:#2a2a2a;transform:scaleY(1.14);transform-origin:0 7.65px;right:115.20px;text-align:right;">57.69</div><div class="t" style="top:418.95px;font-size:8.45px;line-height:9.44px;color:#2a2a2a;transform:scaleY(1.14);transform-origin:0 7.65px;right:56.70px;text-align:right;">11,933.72</div><div class="t" style="top:418.95px;font-size:8.45px;line-height:9.44px;color:#2a2a2a;transform:scaleY(1.14);transform-origin:0 7.65px;right:11.70px;text-align:right;">11,233.15</div><div style="position:absolute;left:143px;top:430.30px;width:850.5px;height:0;border-top:1px solid #ececec;"></div><div class="t" style="top:434.61px;font-size:8.45px;line-height:9.44px;color:#2a2a2a;transform:scaleY(1.14);transform-origin:0 7.65px;left:147.00px;">7/30/2022</div><div class="t" style="top:434.61px;font-size:8.45px;line-height:9.44px;color:#2a2a2a;transform:scaleY(1.14);transform-origin:0 7.65px;left:195.60px;">Fairfield Inn</div><div class="t" style="top:434.61px;font-size:8.45px;line-height:9.44px;color:#2a2a2a;transform:scaleY(1.14);transform-origin:0 7.65px;right:690.60px;text-align:right;">93</div><div class="t" style="top:434.61px;font-size:8.45px;line-height:9.44px;color:#2a2a2a;transform:scaleY(1.14);transform-origin:0 7.65px;right:625.30px;text-align:right;">95.00</div><div class="t" style="top:434.61px;font-size:8.45px;line-height:9.44px;color:#2a2a2a;transform:scaleY(1.14);transform-origin:0 7.65px;right:580.80px;text-align:right;">94.00</div><div class="t" style="top:434.61px;font-size:8.45px;line-height:9.44px;color:#2a2a2a;transform:scaleY(1.14);transform-origin:0 7.65px;right:526.70px;text-align:right;">146.95</div><div class="t" style="top:434.61px;font-size:8.45px;line-height:9.44px;color:#2a2a2a;transform:scaleY(1.14);transform-origin:0 7.65px;right:467.00px;text-align:right;">180.70</div><div class="t" style="top:434.61px;font-size:8.45px;line-height:9.44px;color:#2a2a2a;transform:scaleY(1.14);transform-origin:0 7.65px;right:406.70px;text-align:right;">181.02</div><div class="t" style="top:434.61px;font-size:8.45px;line-height:9.44px;color:#2a2a2a;transform:scaleY(1.14);transform-origin:0 7.65px;left:601.60px;">93....</div><div class="t" style="top:434.61px;font-size:8.45px;line-height:9.44px;color:#2a2a2a;transform:scaleY(1.14);transform-origin:0 7.65px;right:329.70px;text-align:right;">95.00</div><div class="t" style="top:434.61px;font-size:8.45px;line-height:9.44px;color:#2a2a2a;transform:scaleY(1.14);transform-origin:0 7.65px;right:270.80px;text-align:right;">94.00</div><div class="t" style="top:434.61px;font-size:8.45px;line-height:9.44px;color:#2a2a2a;transform:scaleY(1.14);transform-origin:0 7.65px;right:212.70px;text-align:right;">136.67</div><div class="t" style="top:434.61px;font-size:8.45px;line-height:9.44px;color:#2a2a2a;transform:scaleY(1.14);transform-origin:0 7.65px;right:176.30px;text-align:right;">171.66</div><div class="t" style="top:434.61px;font-size:8.45px;line-height:9.44px;color:#2a2a2a;transform:scaleY(1.14);transform-origin:0 7.65px;right:115.20px;text-align:right;">170.16</div><div class="t" style="top:434.61px;font-size:8.45px;line-height:9.44px;color:#2a2a2a;transform:scaleY(1.14);transform-origin:0 7.65px;right:56.70px;text-align:right;">13,666.64</div><div class="t" style="top:434.61px;font-size:8.45px;line-height:9.44px;color:#2a2a2a;transform:scaleY(1.14);transform-origin:0 7.65px;left:951.90px;">17,166....</div><div style="position:absolute;left:143px;top:445.96px;width:850.5px;height:0;border-top:1px solid #ececec;"></div><div class="t" style="top:450.27px;font-size:8.45px;line-height:9.44px;color:#2a2a2a;transform:scaleY(1.14);transform-origin:0 7.65px;left:147.00px;">7/30/2022</div><div class="t" style="top:450.27px;font-size:8.45px;line-height:9.44px;color:#2a2a2a;transform:scaleY(1.14);transform-origin:0 7.65px;left:195.60px;">Four Points - Miami</div><div class="t" style="top:450.27px;font-size:8.45px;line-height:9.44px;color:#2a2a2a;transform:scaleY(1.14);transform-origin:0 7.65px;right:690.60px;text-align:right;">80</div><div class="t" style="top:450.27px;font-size:8.45px;line-height:9.44px;color:#2a2a2a;transform:scaleY(1.14);transform-origin:0 7.65px;right:625.30px;text-align:right;">69.00</div><div class="t" style="top:450.27px;font-size:8.45px;line-height:9.44px;color:#2a2a2a;transform:scaleY(1.14);transform-origin:0 7.65px;right:580.80px;text-align:right;">82.00</div><div class="t" style="top:450.27px;font-size:8.45px;line-height:9.44px;color:#2a2a2a;transform:scaleY(1.14);transform-origin:0 7.65px;right:526.70px;text-align:right;">125.16</div><div class="t" style="top:450.27px;font-size:8.45px;line-height:9.44px;color:#2a2a2a;transform:scaleY(1.14);transform-origin:0 7.65px;right:467.00px;text-align:right;">114.03</div><div class="t" style="top:450.27px;font-size:8.45px;line-height:9.44px;color:#2a2a2a;transform:scaleY(1.14);transform-origin:0 7.65px;right:406.70px;text-align:right;">148.11</div><div class="t" style="top:450.27px;font-size:8.45px;line-height:9.44px;color:#2a2a2a;transform:scaleY(1.14);transform-origin:0 7.65px;left:601.60px;">96....</div><div class="t" style="top:450.27px;font-size:8.45px;line-height:9.44px;color:#2a2a2a;transform:scaleY(1.14);transform-origin:0 7.65px;right:329.70px;text-align:right;">83.13</div><div class="t" style="top:450.27px;font-size:8.45px;line-height:9.44px;color:#2a2a2a;transform:scaleY(1.14);transform-origin:0 7.65px;right:270.80px;text-align:right;">98.80</div><div class="t" style="top:450.27px;font-size:8.45px;line-height:9.44px;color:#2a2a2a;transform:scaleY(1.14);transform-origin:0 7.65px;right:212.70px;text-align:right;">120.64</div><div class="t" style="top:450.27px;font-size:8.45px;line-height:9.44px;color:#2a2a2a;transform:scaleY(1.14);transform-origin:0 7.65px;right:176.30px;text-align:right;">94.80</div><div class="t" style="top:450.27px;font-size:8.45px;line-height:9.44px;color:#2a2a2a;transform:scaleY(1.14);transform-origin:0 7.65px;right:115.20px;text-align:right;">146.32</div><div class="t" style="top:450.27px;font-size:8.45px;line-height:9.44px;color:#2a2a2a;transform:scaleY(1.14);transform-origin:0 7.65px;right:56.70px;text-align:right;">10,012.71</div><div class="t" style="top:450.27px;font-size:8.45px;line-height:9.44px;color:#2a2a2a;transform:scaleY(1.14);transform-origin:0 7.65px;right:11.70px;text-align:right;">7,868.03</div><div style="position:absolute;left:143px;top:461.62px;width:850.5px;height:0;border-top:1px solid #ececec;"></div><div class="t" style="top:465.93px;font-size:8.45px;line-height:9.44px;color:#2a2a2a;transform:scaleY(1.14);transform-origin:0 7.65px;left:147.00px;">7/30/2022</div><div class="t" style="top:465.93px;font-size:8.45px;line-height:9.44px;color:#2a2a2a;transform:scaleY(1.14);transform-origin:0 7.65px;left:195.60px;">Hilton Garden Inn</div><div class="t" style="top:465.93px;font-size:8.45px;line-height:9.44px;color:#2a2a2a;transform:scaleY(1.14);transform-origin:0 7.65px;right:690.60px;text-align:right;">93</div><div class="t" style="top:465.93px;font-size:8.45px;line-height:9.44px;color:#2a2a2a;transform:scaleY(1.14);transform-origin:0 7.65px;right:625.30px;text-align:right;">0.00</div><div class="t" style="top:465.93px;font-size:8.45px;line-height:9.44px;color:#2a2a2a;transform:scaleY(1.14);transform-origin:0 7.65px;right:580.80px;text-align:right;">0.00</div><div class="t" style="top:465.93px;font-size:8.45px;line-height:9.44px;color:#2a2a2a;transform:scaleY(1.14);transform-origin:0 7.65px;right:526.70px;text-align:right;">153.31</div><div class="t" style="top:465.93px;font-size:8.45px;line-height:9.44px;color:#2a2a2a;transform:scaleY(1.14);transform-origin:0 7.65px;right:467.00px;text-align:right;">207.51</div><div class="t" style="top:465.93px;font-size:8.45px;line-height:9.44px;color:#2a2a2a;transform:scaleY(1.14);transform-origin:0 7.65px;right:406.70px;text-align:right;">0.00</div><div class="t" style="top:465.93px;font-size:8.45px;line-height:9.44px;color:#2a2a2a;transform:scaleY(1.14);transform-origin:0 7.65px;left:601.60px;">96....</div><div class="t" style="top:465.93px;font-size:8.45px;line-height:9.44px;color:#2a2a2a;transform:scaleY(1.14);transform-origin:0 7.65px;right:329.70px;text-align:right;">92.78</div><div class="t" style="top:465.93px;font-size:8.45px;line-height:9.44px;color:#2a2a2a;transform:scaleY(1.14);transform-origin:0 7.65px;right:270.80px;text-align:right;">0.00</div><div class="t" style="top:465.93px;font-size:8.45px;line-height:9.44px;color:#2a2a2a;transform:scaleY(1.14);transform-origin:0 7.65px;right:212.70px;text-align:right;">148.56</div><div class="t" style="top:465.93px;font-size:8.45px;line-height:9.44px;color:#2a2a2a;transform:scaleY(1.14);transform-origin:0 7.65px;right:176.30px;text-align:right;">192.53</div><div class="t" style="top:465.93px;font-size:8.45px;line-height:9.44px;color:#2a2a2a;transform:scaleY(1.14);transform-origin:0 7.65px;right:115.20px;text-align:right;">0.00</div><div class="t" style="top:465.93px;font-size:8.45px;line-height:9.44px;color:#2a2a2a;transform:scaleY(1.14);transform-origin:0 7.65px;right:56.70px;text-align:right;">14,410.67</div><div class="t" style="top:465.93px;font-size:8.45px;line-height:9.44px;color:#2a2a2a;transform:scaleY(1.14);transform-origin:0 7.65px;right:11.70px;text-align:right;">0.00</div><div style="position:absolute;left:143px;top:477.28px;width:850.5px;height:0;border-top:1px solid #ececec;"></div><div class="t" style="top:481.59px;font-size:8.45px;line-height:9.44px;color:#2a2a2a;transform:scaleY(1.14);transform-origin:0 7.65px;left:147.00px;">7/30/2022</div><div class="t" style="top:481.59px;font-size:8.45px;line-height:9.44px;color:#2a2a2a;transform:scaleY(1.14);transform-origin:0 7.65px;left:195.60px;">Hyatt Place</div><div class="t" style="top:481.59px;font-size:8.45px;line-height:9.44px;color:#2a2a2a;transform:scaleY(1.14);transform-origin:0 7.65px;right:690.60px;text-align:right;">119</div><div class="t" style="top:481.59px;font-size:8.45px;line-height:9.44px;color:#2a2a2a;transform:scaleY(1.14);transform-origin:0 7.65px;right:625.30px;text-align:right;">121.00</div><div class="t" style="top:481.59px;font-size:8.45px;line-height:9.44px;color:#2a2a2a;transform:scaleY(1.14);transform-origin:0 7.65px;right:580.80px;text-align:right;">0.00</div><div class="t" style="top:481.59px;font-size:8.45px;line-height:9.44px;color:#2a2a2a;transform:scaleY(1.14);transform-origin:0 7.65px;right:526.70px;text-align:right;">65.49</div><div class="t" style="top:481.59px;font-size:8.45px;line-height:9.44px;color:#2a2a2a;transform:scaleY(1.14);transform-origin:0 7.65px;right:467.00px;text-align:right;">63.38</div><div class="t" style="top:481.59px;font-size:8.45px;line-height:9.44px;color:#2a2a2a;transform:scaleY(1.14);transform-origin:0 7.65px;right:406.70px;text-align:right;">0.00</div><div class="t" style="top:481.59px;font-size:8.45px;line-height:9.44px;color:#2a2a2a;transform:scaleY(1.14);transform-origin:0 7.65px;left:601.60px;">10...</div><div class="t" style="top:481.59px;font-size:8.45px;line-height:9.44px;color:#2a2a2a;transform:scaleY(1.14);transform-origin:0 7.65px;right:329.70px;text-align:right;">100.00</div><div class="t" style="top:481.59px;font-size:8.45px;line-height:9.44px;color:#2a2a2a;transform:scaleY(1.14);transform-origin:0 7.65px;right:270.80px;text-align:right;">0.00</div><div class="t" style="top:481.59px;font-size:8.45px;line-height:9.44px;color:#2a2a2a;transform:scaleY(1.14);transform-origin:0 7.65px;right:212.70px;text-align:right;">65.49</div><div class="t" style="top:481.59px;font-size:8.45px;line-height:9.44px;color:#2a2a2a;transform:scaleY(1.14);transform-origin:0 7.65px;right:176.30px;text-align:right;">63.38</div><div class="t" style="top:481.59px;font-size:8.45px;line-height:9.44px;color:#2a2a2a;transform:scaleY(1.14);transform-origin:0 7.65px;right:115.20px;text-align:right;">0.00</div><div class="t" style="top:481.59px;font-size:8.45px;line-height:9.44px;color:#2a2a2a;transform:scaleY(1.14);transform-origin:0 7.65px;right:56.70px;text-align:right;">8,186.37</div><div class="t" style="top:481.59px;font-size:8.45px;line-height:9.44px;color:#2a2a2a;transform:scaleY(1.14);transform-origin:0 7.65px;right:11.70px;text-align:right;">7,922.56</div><div style="position:absolute;left:143px;top:492.94px;width:850.5px;height:0;border-top:1px solid #ececec;"></div><div class="t" style="top:497.25px;font-size:8.45px;line-height:9.44px;color:#2a2a2a;transform:scaleY(1.14);transform-origin:0 7.65px;left:147.00px;">7/30/2022</div><div class="t" style="top:497.25px;font-size:8.45px;line-height:9.44px;color:#2a2a2a;transform:scaleY(1.14);transform-origin:0 7.65px;left:195.60px;">New Hilton Sirenity...</div><div class="t" style="top:497.25px;font-size:8.45px;line-height:9.44px;color:#2a2a2a;transform:scaleY(1.14);transform-origin:0 7.65px;right:690.60px;text-align:right;">39</div><div class="t" style="top:497.25px;font-size:8.45px;line-height:9.44px;color:#2a2a2a;transform:scaleY(1.14);transform-origin:0 7.65px;right:625.30px;text-align:right;">42.00</div><div class="t" style="top:497.25px;font-size:8.45px;line-height:9.44px;color:#2a2a2a;transform:scaleY(1.14);transform-origin:0 7.65px;right:580.80px;text-align:right;">40.00</div><div class="t" style="top:497.25px;font-size:8.45px;line-height:9.44px;color:#2a2a2a;transform:scaleY(1.14);transform-origin:0 7.65px;right:526.70px;text-align:right;">158.41</div><div class="t" style="top:497.25px;font-size:8.45px;line-height:9.44px;color:#2a2a2a;transform:scaleY(1.14);transform-origin:0 7.65px;right:467.00px;text-align:right;">138.10</div><div class="t" style="top:497.25px;font-size:8.45px;line-height:9.44px;color:#2a2a2a;transform:scaleY(1.14);transform-origin:0 7.65px;right:406.70px;text-align:right;">153.75</div><div class="t" style="top:497.25px;font-size:8.45px;line-height:9.44px;color:#2a2a2a;transform:scaleY(1.14);transform-origin:0 7.65px;left:601.60px;">95....</div><div class="t" style="top:497.25px;font-size:8.45px;line-height:9.44px;color:#2a2a2a;transform:scaleY(1.14);transform-origin:0 7.65px;right:329.70px;text-align:right;">100.00</div><div class="t" style="top:497.25px;font-size:8.45px;line-height:9.44px;color:#2a2a2a;transform:scaleY(1.14);transform-origin:0 7.65px;right:270.80px;text-align:right;">95.23</div><div class="t" style="top:497.25px;font-size:8.45px;line-height:9.44px;color:#2a2a2a;transform:scaleY(1.14);transform-origin:0 7.65px;right:212.70px;text-align:right;">150.86</div><div class="t" style="top:497.25px;font-size:8.45px;line-height:9.44px;color:#2a2a2a;transform:scaleY(1.14);transform-origin:0 7.65px;right:176.30px;text-align:right;">138.10</div><div class="t" style="top:497.25px;font-size:8.45px;line-height:9.44px;color:#2a2a2a;transform:scaleY(1.14);transform-origin:0 7.65px;right:115.20px;text-align:right;">146.43</div><div class="t" style="top:497.25px;font-size:8.45px;line-height:9.44px;color:#2a2a2a;transform:scaleY(1.14);transform-origin:0 7.65px;right:56.70px;text-align:right;">6,336.30</div><div class="t" style="top:497.25px;font-size:8.45px;line-height:9.44px;color:#2a2a2a;transform:scaleY(1.14);transform-origin:0 7.65px;right:11.70px;text-align:right;">5,800.00</div><div style="position:absolute;left:143px;top:508.60px;width:850.5px;height:0;border-top:1px solid #ececec;"></div><div class="t" style="top:523.69px;font-size:10.5px;line-height:11.73px;color:#333;left:149.00px;">AP AGING</div><div class="t" style="top:523.69px;font-size:10.5px;line-height:11.73px;color:#333;left:577.80px;">AR AGING</div><div style="position:absolute;left:149.5px;top:574.1px;width:11px;height:11px;border-radius:50%;background:#3b7dd8;"></div><div class="t" style="top:575.67px;font-size:8.1px;line-height:9.05px;color:#333;left:163.60px;">Current</div><div style="position:absolute;left:149.5px;top:592.1px;width:11px;height:11px;border-radius:50%;background:#7c6cc0;"></div><div class="t" style="top:593.67px;font-size:8.1px;line-height:9.05px;color:#333;left:163.60px;">Overdue 1-30 days</div><div style="position:absolute;left:578.1px;top:583.5px;width:11px;height:11px;border-radius:50%;background:#3b7dd8;"></div><div class="t" style="top:585.07px;font-size:8.1px;line-height:9.05px;color:#333;left:592.20px;">Overdue 1-30 days</div><div style="position:absolute;left:578.1px;top:601.1px;width:11px;height:11px;border-radius:50%;background:#7c6cc0;"></div><div class="t" style="top:602.67px;font-size:8.1px;line-height:9.05px;color:#333;left:592.20px;">Overdue 31-60 days</div><svg style="left:0;top:0" width="1000" height="609"><path d="M407.20 554.00 A59 59 0 0 1 420.07 555.42 L411.19 595.14 A18.3 18.3 0 0 0 407.20 594.70 Z" fill="#7b6bbf" stroke="#fff" stroke-width="1"/><path d="M420.07 555.42 A59 59 0 0 1 457.98 582.97 L422.95 603.68 A18.3 18.3 0 0 0 411.19 595.14 Z" fill="#00bfad" stroke="#fff" stroke-width="1"/><path d="M457.98 582.97 A59 59 0 0 1 465.04 601.34 L425.14 609.38 A18.3 18.3 0 0 0 422.95 603.68 Z" fill="#ffd68a" stroke="#fff" stroke-width="1"/><path d="M465.04 601.34 A59 59 0 0 1 452.40 650.92 L421.22 624.76 A18.3 18.3 0 0 0 425.14 609.38 Z" fill="#e6007a" stroke="#fff" stroke-width="1"/><path d="M452.40 650.92 A59 59 0 0 1 387.02 668.44 L400.94 630.20 A18.3 18.3 0 0 0 421.22 624.76 Z" fill="#3b7dd8" stroke="#fff" stroke-width="1"/><path d="M387.02 668.44 A59 59 0 0 1 407.20 554.00 L407.20 594.70 A18.3 18.3 0 0 0 400.94 630.20 Z" fill="#e6007a" stroke="#fff" stroke-width="1"/></svg><svg style="left:0;top:0" width="1000" height="609"><path d="M836.00 554.00 A59 59 0 0 1 842.17 554.32 L837.91 594.80 A18.3 18.3 0 0 0 836.00 594.70 Z" fill="#3b7dd8" stroke="#fff" stroke-width="1"/><path d="M842.17 554.32 A59 59 0 0 1 861.96 560.02 L844.05 596.57 A18.3 18.3 0 0 0 837.91 594.80 Z" fill="#7b6bbf" stroke="#fff" stroke-width="1"/><path d="M861.96 560.02 A59 59 0 0 1 863.70 560.91 L844.59 596.84 A18.3 18.3 0 0 0 844.05 596.57 Z" fill="#00bfad" stroke="#fff" stroke-width="1"/><path d="M863.70 560.91 A59 59 0 1 1 836.00 554.00 L836.00 594.70 A18.3 18.3 0 1 0 844.59 596.84 Z" fill="#ffd68a" stroke="#fff" stroke-width="1"/></svg><div style="position:absolute;left:157.2px;top:21.3px;width:136.8px;height:48.6px;box-sizing:border-box;background:#00adef;border:2.2px solid #2a2a2e;"></div><div class="t" style="top:28.93px;font-size:17.2px;line-height:19.22px;color:#fff;font-weight:bold;left:-75.60px;width:600px;text-align:center;">User-Friendly</div><div class="t" style="top:45.13px;font-size:17.2px;line-height:19.22px;color:#fff;font-weight:bold;left:-75.60px;width:600px;text-align:center;">Search Bar</div><div style="position:absolute;left:821px;top:28.6px;width:176.3px;height:31.4px;box-sizing:border-box;background:#00adef;border:2.2px solid #2a2a2e;"></div><div class="t" style="top:35.13px;font-size:17.2px;line-height:19.22px;color:#fff;font-weight:bold;left:609.15px;width:600px;text-align:center;">Full Audit Tracking</div><div style="position:absolute;left:446.8px;top:66px;width:234px;height:30.5px;box-sizing:border-box;background:#00adef;border:2.2px solid #2a2a2e;"></div><div class="t" style="top:72.90px;font-size:16.9px;line-height:18.88px;color:#fff;font-weight:bold;left:263.80px;width:600px;text-align:center;">Customizable Dashboards</div><div style="position:absolute;left:553px;top:182.2px;width:156px;height:47.7px;box-sizing:border-box;background:#00adef;border:2.2px solid #2a2a2e;"></div><div class="t" style="top:189.33px;font-size:17.2px;line-height:19.22px;color:#fff;font-weight:bold;left:331.00px;width:600px;text-align:center;">Single Sign-On</div><div class="t" style="top:206.03px;font-size:17.2px;line-height:19.22px;color:#fff;font-weight:bold;left:331.00px;width:600px;text-align:center;">Bank Integration</div><div style="position:absolute;left:707px;top:181.7px;width:119.7px;height:171.1px;box-sizing:border-box;border:2.2px solid #2a2a2e;"></div></body></html>
